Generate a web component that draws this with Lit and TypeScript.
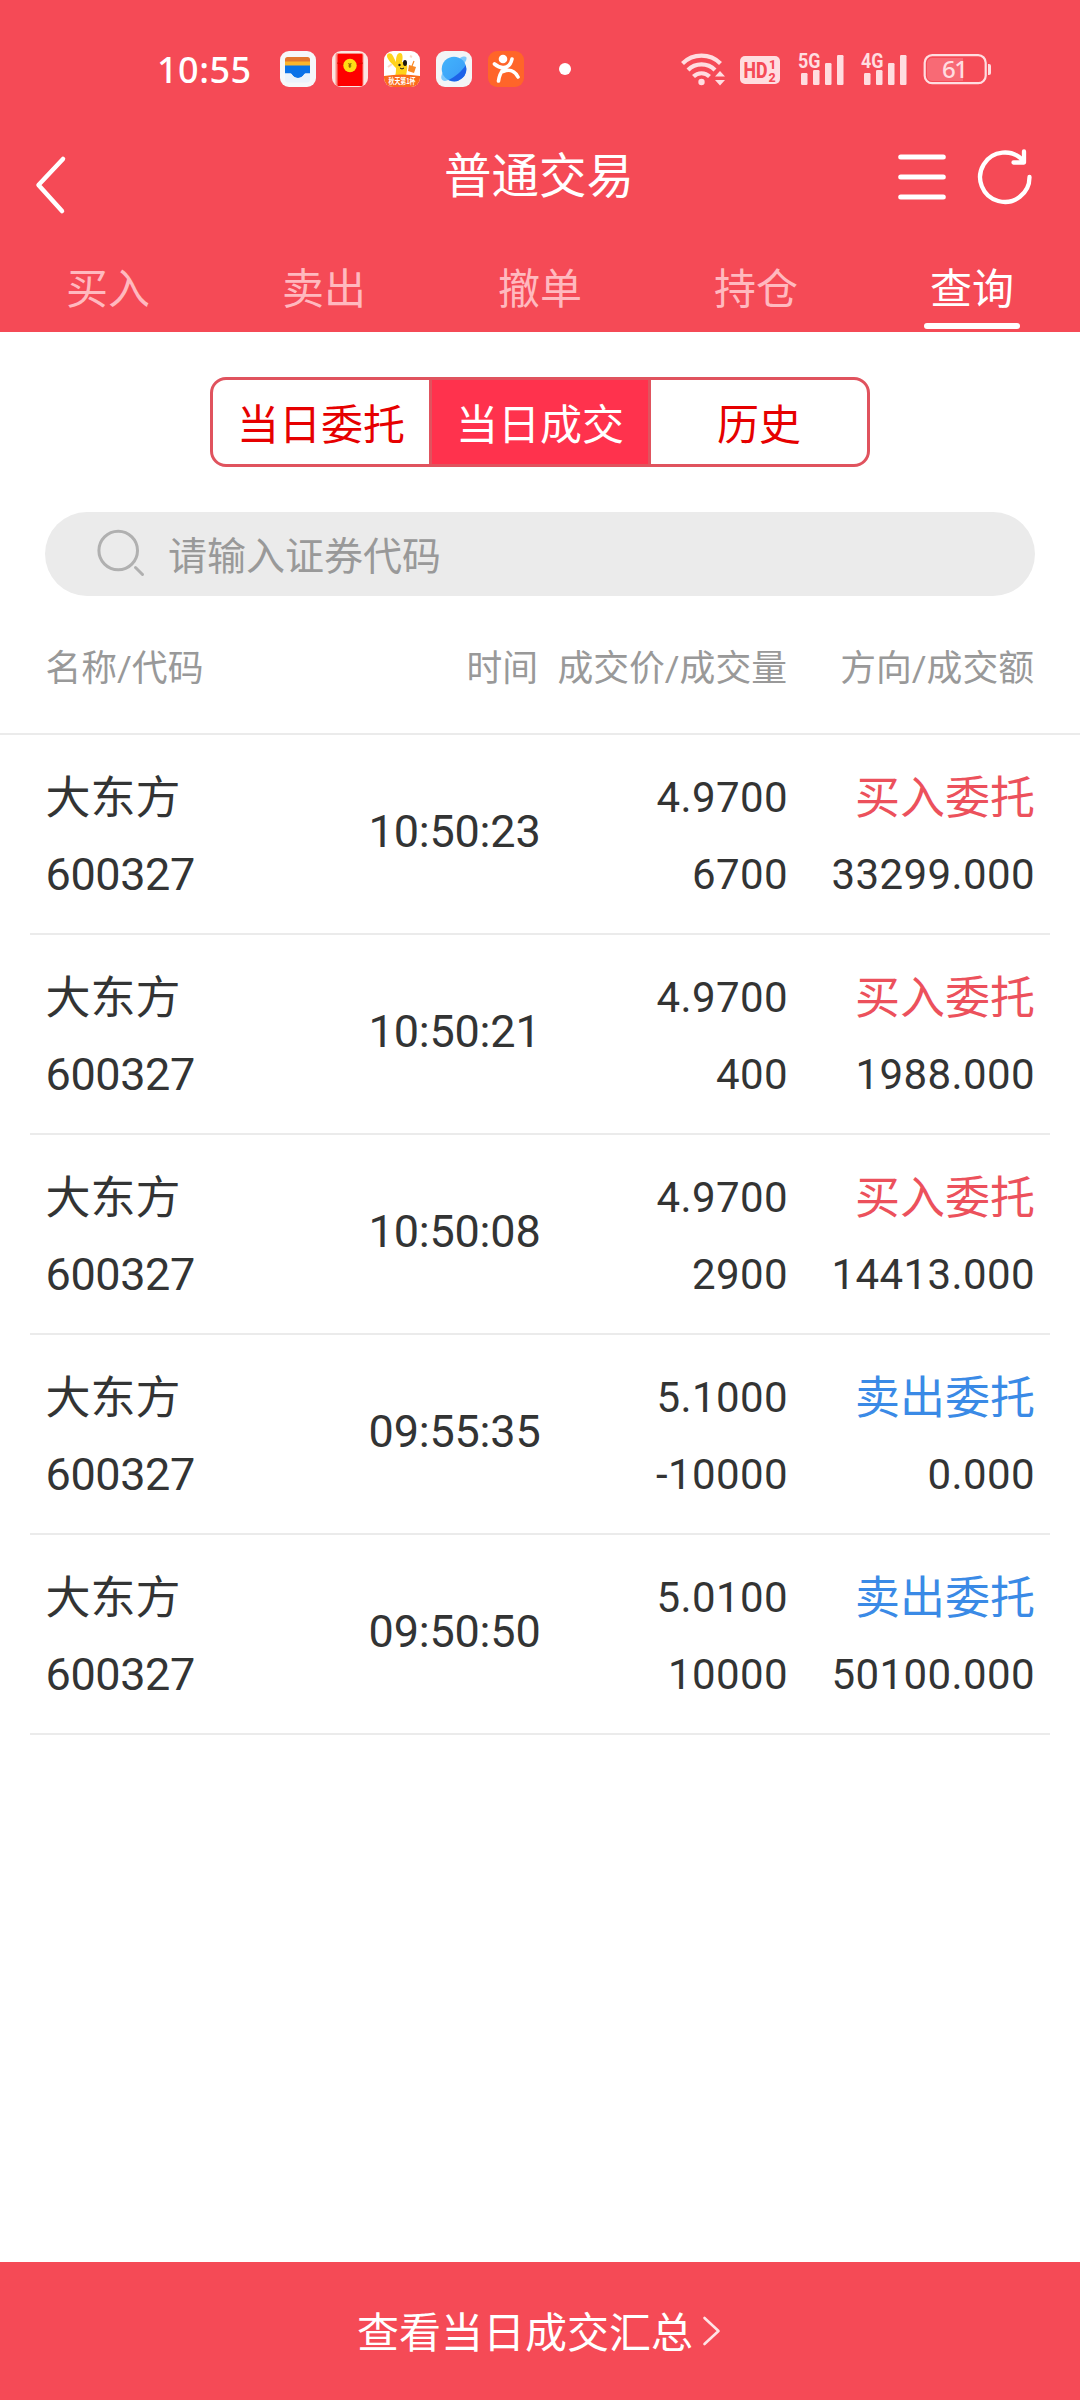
import { LitElement, html, css, svg } from "lit";
import { customElement, property } from "lit/decorators.js";
import { classMap } from "lit/directives/class-map.js";

interface Deal {
  name: string;
  code: string;
  time: string;
  price: string;
  volume: string;
  side: "buy" | "sell";
  amount: string;
}

const deals: Deal[] = [
  { name: "大东方", code: "600327", time: "10:50:23", price: "4.9700", volume: "6700", side: "buy", amount: "33299.000" },
  { name: "大东方", code: "600327", time: "10:50:21", price: "4.9700", volume: "400", side: "buy", amount: "1988.000" },
  { name: "大东方", code: "600327", time: "10:50:08", price: "4.9700", volume: "2900", side: "buy", amount: "14413.000" },
  { name: "大东方", code: "600327", time: "09:55:35", price: "5.1000", volume: "-10000", side: "sell", amount: "0.000" },
  { name: "大东方", code: "600327", time: "09:50:50", price: "5.0100", volume: "10000", side: "sell", amount: "50100.000" },
];

const signal = (label: string) => html`
  <svg class="signal" width="47" height="36" viewBox="0 0 47 36">
    <text x="0" y="17" textLength="22.5" lengthAdjust="spacingAndGlyphs">${label}</text>
    ${[
      [3, 22, 12],
      [15, 19, 15],
      [27, 12, 22],
      [39, 4, 30],
    ].map(([x, y, h]) => svg`<rect x=${x} y=${y} width="6.5" height=${h} rx="1.2" />`)}
  </svg>
`;

@customElement("status-bar")
export class StatusBar extends LitElement {
  static styles = css`
    :host {
      display: flex;
      align-items: center;
      height: 138px;
      padding: 0 89px 0 157px;
      box-sizing: border-box;
      color: #fff;
    }
    svg {
      display: block;
      flex: none;
      overflow: visible;
    }
    .clock {
      width: 123px;
      padding-top: 1px;
      font: 500 36px/36px "Noto Sans", Roboto, sans-serif;
      letter-spacing: 0.500px;
    }
    .apps {
      display: flex;
      gap: 16px;
    }
    .dot {
      width: 12px;
      height: 12px;
      margin-left: 35px;
      border-radius: 50%;
      background: #fff;
    }
    .system {
      display: flex;
      align-items: center;
      margin-left: auto;
      fill: #ffdde0;
    }
    .wifi { margin-right: 14px; }
    .hd { margin-right: 18px; }
    .signal { margin-right: 16px; }
    .battery { margin-left: -1px; }
    .signal text {
      font: 700 20.5px Roboto, sans-serif;
    }
    .hd-text { font: 800 22px Roboto, sans-serif; fill: #f54a56; }
    .hd-num { font: 800 12.500px Roboto, sans-serif; fill: #f54a56; }
    .battery-text { font: 500 24px "Noto Sans", Roboto, sans-serif; }
    .promo { font: 700 8px "Noto Sans CJK SC", sans-serif; fill: #fff; }
    .yen { font: 700 6.5px Roboto, sans-serif; fill: #8a5a00; }
  `;

  render() {
    return html`
      <span class="clock">10:55</span>
      <div class="apps">
        <svg width="36" height="36" viewBox="0 0 36 36">
          <rect width="36" height="36" rx="9" fill="#f6f7fa" />
          <path d="M5 8.500a2.500 2.500 0 0 1 2.500-2.500h20a2.500 2.500 0 0 1 2.500 2.500V13H5z" fill="#e3762f" />
          <rect x="5" y="10.500" width="25" height="5" fill="#fdb52d" />
          <path d="M5 14.500h25v8h-4.500c-2 0-2 4.500-7.500 4.500s-5.500-4.500-7.500-4.500H5z" fill="#0b72e8" />
          <path d="M5 22.500h5.500c2 0 2 4.500 7.500 4.500s5.500-4.500 7.500-4.500H30v6a3 3 0 0 1-3 3H8a3 3 0 0 1-3-3z" fill="#eaf2fc" />
        </svg>
        <svg width="36" height="36" viewBox="0 0 36 36">
          <rect width="36" height="36" rx="9" fill="#fbe6e2" />
          <rect x="3.500" y="2" width="28" height="33" rx="2" fill="#f98a80" />
          <rect x="5.500" y="3" width="25" height="32" rx="1" fill="#fe0000" />
          <path d="M5 12q13 4 26 0" fill="none" stroke="#d90b00" stroke-width="1" />
          <circle cx="18" cy="14.500" r="6.700" fill="#ffdc14" />
          <text class="yen" x="16" y="17">¥</text>
        </svg>
        <svg width="36" height="36" viewBox="0 0 36 36">
          <defs><clipPath id="promo"><rect width="36" height="36" rx="9" /></clipPath></defs>
          <g clip-path="url(#promo)">
            <rect width="36" height="36" fill="#fff" />
            <path d="M11 25c1-3 1-5 1-8C8 13 3 8 3 5c0-3 4-4 6 0l3 6c0-5 1-9 4-9s3 5 2 9c5 0 6 4 5 8l-1 6z" fill="#ffd21c" />
            <ellipse cx="21" cy="12" rx="2" ry="3" fill="#1b1610" />
            <circle cx="15.500" cy="14" r="1.200" fill="#1b1610" />
            <path d="M16 17q2 2 4 0" stroke="#1b1610" fill="none" />
            <path d="M25 14l7 2-2 6-6-2z" fill="#f98a24" />
            <path d="M28 15l2-5" stroke="#f98a24" stroke-width="1.200" />
            <path d="M4 16l4-3M26 5l2 1" stroke="#fbd9c8" stroke-width="2" />
            <path d="M0 25q18-3 36 0v11H0z" fill="#fb6b1c" />
          </g>
          <text class="promo" x="4.500" y="33.300" textLength="27" lengthAdjust="spacingAndGlyphs">秋天第1杯</text>
        </svg>
        <svg width="36" height="36" viewBox="0 0 36 36">
          <defs>
            <linearGradient id="planet" x1="0" y1="0" x2="1" y2="1">
              <stop offset="0" stop-color="#42b4fb" />
              <stop offset="1" stop-color="#3a9af8" />
            </linearGradient>
          </defs>
          <rect width="36" height="36" rx="9" fill="#f3f4f6" />
          <path d="M24 7c4-2 7-2 6.500 1-.300 2-2 4-3.500 6zM6.500 22C5 25 4.500 28 7 29.500c2 1 5 0 7-1.500z" fill="#7dc8fd" />
          <circle cx="18" cy="18" r="12.300" fill="url(#planet)" />
          <path d="M29.700 14.200A12.300 12.300 0 0 1 12.500 29C19 26 26 20 29.700 14.200z" fill="#1d62e8" />
        </svg>
        <svg width="36" height="36" viewBox="0 0 36 36">
          <rect width="36" height="36" rx="9" fill="#ff6529" />
          <circle cx="15" cy="8" r="4.300" fill="#fff" />
          <path d="M6.500 13c3 2.500 6 4 9.500 3.500C20 16 23 13 24 8M16 17c-3 4-5 8-5.500 13M15 20.500c8-3 12 0 15 5.500" fill="none" stroke="#fff" stroke-width="3.600" stroke-linecap="round" stroke-linejoin="round" />
        </svg>
      </div>
      <span class="dot"></span>
      <div class="system">
        <svg class="wifi" width="45" height="36" viewBox="0 0 45 36">
          <circle cx="20.500" cy="31" r="3.200" />
          <g fill="none" stroke="#ffdde0" stroke-width="4.200">
            <path d="M1.500 12.500a27 27 0 0 1 38 0" />
            <path d="M7 19a19 19 0 0 1 27 0" />
            <path d="M12.500 25.500a11.500 11.500 0 0 1 16 0" />
          </g>
          <path d="M34 25.500l5-5.500 5 5.500zM34 29h10l-5 5.500z" />
        </svg>
        <svg class="hd" width="40" height="36" viewBox="0 0 40 36">
          <rect y="5" width="40" height="28" rx="5" />
          <text class="hd-text" x="3.500" y="26.500" textLength="24" lengthAdjust="spacingAndGlyphs">HD</text>
          <text class="hd-num" x="29" y="18">1</text>
          <text class="hd-num" x="28.500" y="30.500">2</text>
        </svg>
        ${signal("5G")} ${signal("4G")}
        <svg class="battery" width="68" height="36" viewBox="0 0 68 36">
          <path d="M9 7h31v23H9a5 5 0 0 1-5-5V12a5 5 0 0 1 5-5z" fill="#f86a75" />
          <rect x="1.700" y="4.200" width="61" height="28" rx="7.500" fill="none" stroke="#ffdde0" stroke-width="2.200" />
          <path d="M65 13h1a2 2 0 0 1 2 2v7a2 2 0 0 1-2 2h-1z" />
          <text class="battery-text" x="19" y="27" textLength="26">61</text>
        </svg>
      </div>
    `;
  }
}

@customElement("deal-row")
export class DealRow extends LitElement {
  @property({ attribute: false }) deal!: Deal;

  static styles = css`
    :host {
      display: grid;
      grid-template-columns: 300px 195px 247.500px 247px;
      height: 198px;
      margin: 0 30px;
      padding: 0 15.500px;
      border-bottom: 2px solid #ebebeb;
      color: #333434;
      font-size: 45px;
    }
    .cell {
      display: flex;
      flex-direction: column;
      padding-top: 31.500px;
      line-height: 64px;
    }
    .line { height: 77px; white-space: nowrap; }
    .code { letter-spacing: -0.400px; line-height: 62px; }
    .time {
      letter-spacing: -0.200px;
      text-align: right;
      line-height: 194px;
      white-space: nowrap;
    }
    .right { text-align: right; }
    .number { font-size: 42px; letter-spacing: 0.400px; line-height: 62px; }
    .buy { color: #ec515c; }
    .sell { color: #3a8ae6; }
  `;

  render() {
    const d = this.deal;
    return html`
      <div class="cell">
        <span class="line">${d.name}</span>
        <span class="line code">${d.code}</span>
      </div>
      <div class="time">${d.time}</div>
      <div class="cell right">
        <span class="line number">${d.price}</span>
        <span class="line number">${d.volume}</span>
      </div>
      <div class="cell right">
        <span class=${classMap({ line: true, buy: d.side === "buy", sell: d.side === "sell" })}>
          ${d.side === "buy" ? "买入委托" : "卖出委托"}
        </span>
        <span class="line number">${d.amount}</span>
      </div>
    `;
  }
}

@customElement("app-root")
export class AppRoot extends LitElement {
  static styles = css`
    :host {
      display: flex;
      flex-direction: column;
      width: 1080px;
      height: 2400px;
      overflow: hidden;
      background: #fff;
      font-family: Roboto, "Noto Sans CJK SC", sans-serif;
    }
    svg { display: block; flex: none; }
    .header {
      height: 332px;
      background: #f54a56;
      color: #fff;
    }
    .title-bar {
      display: grid;
      grid-template-columns: 199px 1fr 201px;
      align-items: center;
      height: 76px;
    }
    .back { margin-left: 32px; }
    .title {
      font-size: 47.500px;
      line-height: 78px;
      text-align: center;
    }
    .actions {
      display: flex;
      gap: 28px;
      padding-left: 17px;
    }
    .tabs {
      display: grid;
      grid-template-columns: repeat(5, 1fr);
      height: 118px;
    }
    .tab {
      display: flex;
      flex-direction: column;
      align-items: center;
      padding-top: 44px;
      font-size: 42px;
      line-height: 64px;
      color: #ffb9bf;
    }
    .active { color: #fff; }
    .active::after {
      content: "";
      width: 96px;
      height: 6px;
      margin-top: 1px;
      border-radius: 3px;
      background: #fff;
    }
    .segments {
      display: grid;
      grid-template-columns: 1fr 222px 1fr;
      width: 660px;
      height: 90px;
      margin: 45px auto 0;
      box-sizing: border-box;
      border: 3px solid #e0535e;
      border-radius: 16px;
      color: #e60000;
      font-size: 42px;
      text-align: center;
    }
    .segment {
      box-sizing: border-box;
      height: 84px;
      padding-top: 6px;
      line-height: 80px;
    }
    .selected {
      border: solid #e0535e;
      border-width: 0 3px;
      background: #ff324d;
      color: #fff;
    }
    .search {
      display: flex;
      align-items: center;
      gap: 23px;
      height: 84px;
      margin: 45px 45px 0;
      padding-left: 50px;
      border-radius: 42px;
      background: #ebebeb;
      color: #999;
      font-size: 39px;
    }
    .placeholder { margin-top: -2px; }
    .columns {
      display: grid;
      grid-template-columns: 300px 192.500px 249px 247px;
      height: 137px;
      padding: 0 45.500px;
      border-bottom: 2px solid #ebebeb;
      color: #999;
      font-size: 35.800px;
      line-height: 146px;
      white-space: nowrap;
    }
    .right { text-align: right; }
    .footer {
      display: flex;
      justify-content: center;
      align-items: center;
      gap: 9px;
      height: 138px;
      margin-top: auto;
      padding-right: 1px;
      background: #f54a56;
      color: #fff;
      font-size: 42px;
    }
    .summary { margin-top: -4px; }
  `;

  render() {
    return html`
      <header class="header">
        <status-bar></status-bar>
        <div class="title-bar">
          <svg class="back" width="36" height="76" viewBox="0 0 36 76">
            <path d="M31 20L6.500 46L30 72" fill="none" stroke="#fff" stroke-width="4.500" stroke-linecap="round" stroke-linejoin="round" />
          </svg>
          <div class="title">普通交易</div>
          <div class="actions">
            <svg width="52" height="60" viewBox="0 0 52 60">
              <path d="M4.700 10H47.300M4.700 30H47.300M4.700 50H47.300" stroke="#fff" stroke-width="5" stroke-linecap="round" />
            </svg>
            <svg width="60" height="60" viewBox="0 0 60 60">
              <path d="M53.500 30A24.700 24.700 0 1 1 47 13.500M48 4.500V15.500H37.500" fill="none" stroke="#fff" stroke-width="4.300" stroke-linecap="round" stroke-linejoin="round" />
            </svg>
          </div>
        </div>
        <nav class="tabs">
          ${["买入", "卖出", "撤单", "持仓", "查询"].map(
            (t) => html`<div class=${classMap({ tab: true, active: t === "查询" })}>${t}</div>`
          )}
        </nav>
      </header>
      <div class="segments">
        <div class="segment">当日委托</div>
        <div class="segment selected">当日成交</div>
        <div class="segment">历史</div>
      </div>
      <div class="search">
        <svg width="50" height="60" viewBox="0 0 50 60">
          <circle cx="23.200" cy="26.500" r="19.300" fill="none" stroke="#b0b0b0" stroke-width="3" />
          <path d="M40.500 43.500L47.500 50.500" stroke="#b0b0b0" stroke-width="3" stroke-linecap="round" />
        </svg>
        <span class="placeholder">请输入证券代码</span>
      </div>
      <div class="columns">
        <span>名称/代码</span>
        <span class="right">时间</span>
        <span class="right">成交价/成交量</span>
        <span class="right">方向/成交额</span>
      </div>
      ${deals.map((d) => html`<deal-row .deal=${d}></deal-row>`)}
      <footer class="footer">
        <span class="summary">查看当日成交汇总</span>
        <svg width="20" height="32" viewBox="0 0 20 32">
          <path d="M2.500 3L16.500 16L2.500 29" fill="none" stroke="#ffe3e5" stroke-width="2.600" stroke-linecap="round" stroke-linejoin="round" />
        </svg>
      </footer>
    `;
  }
}
